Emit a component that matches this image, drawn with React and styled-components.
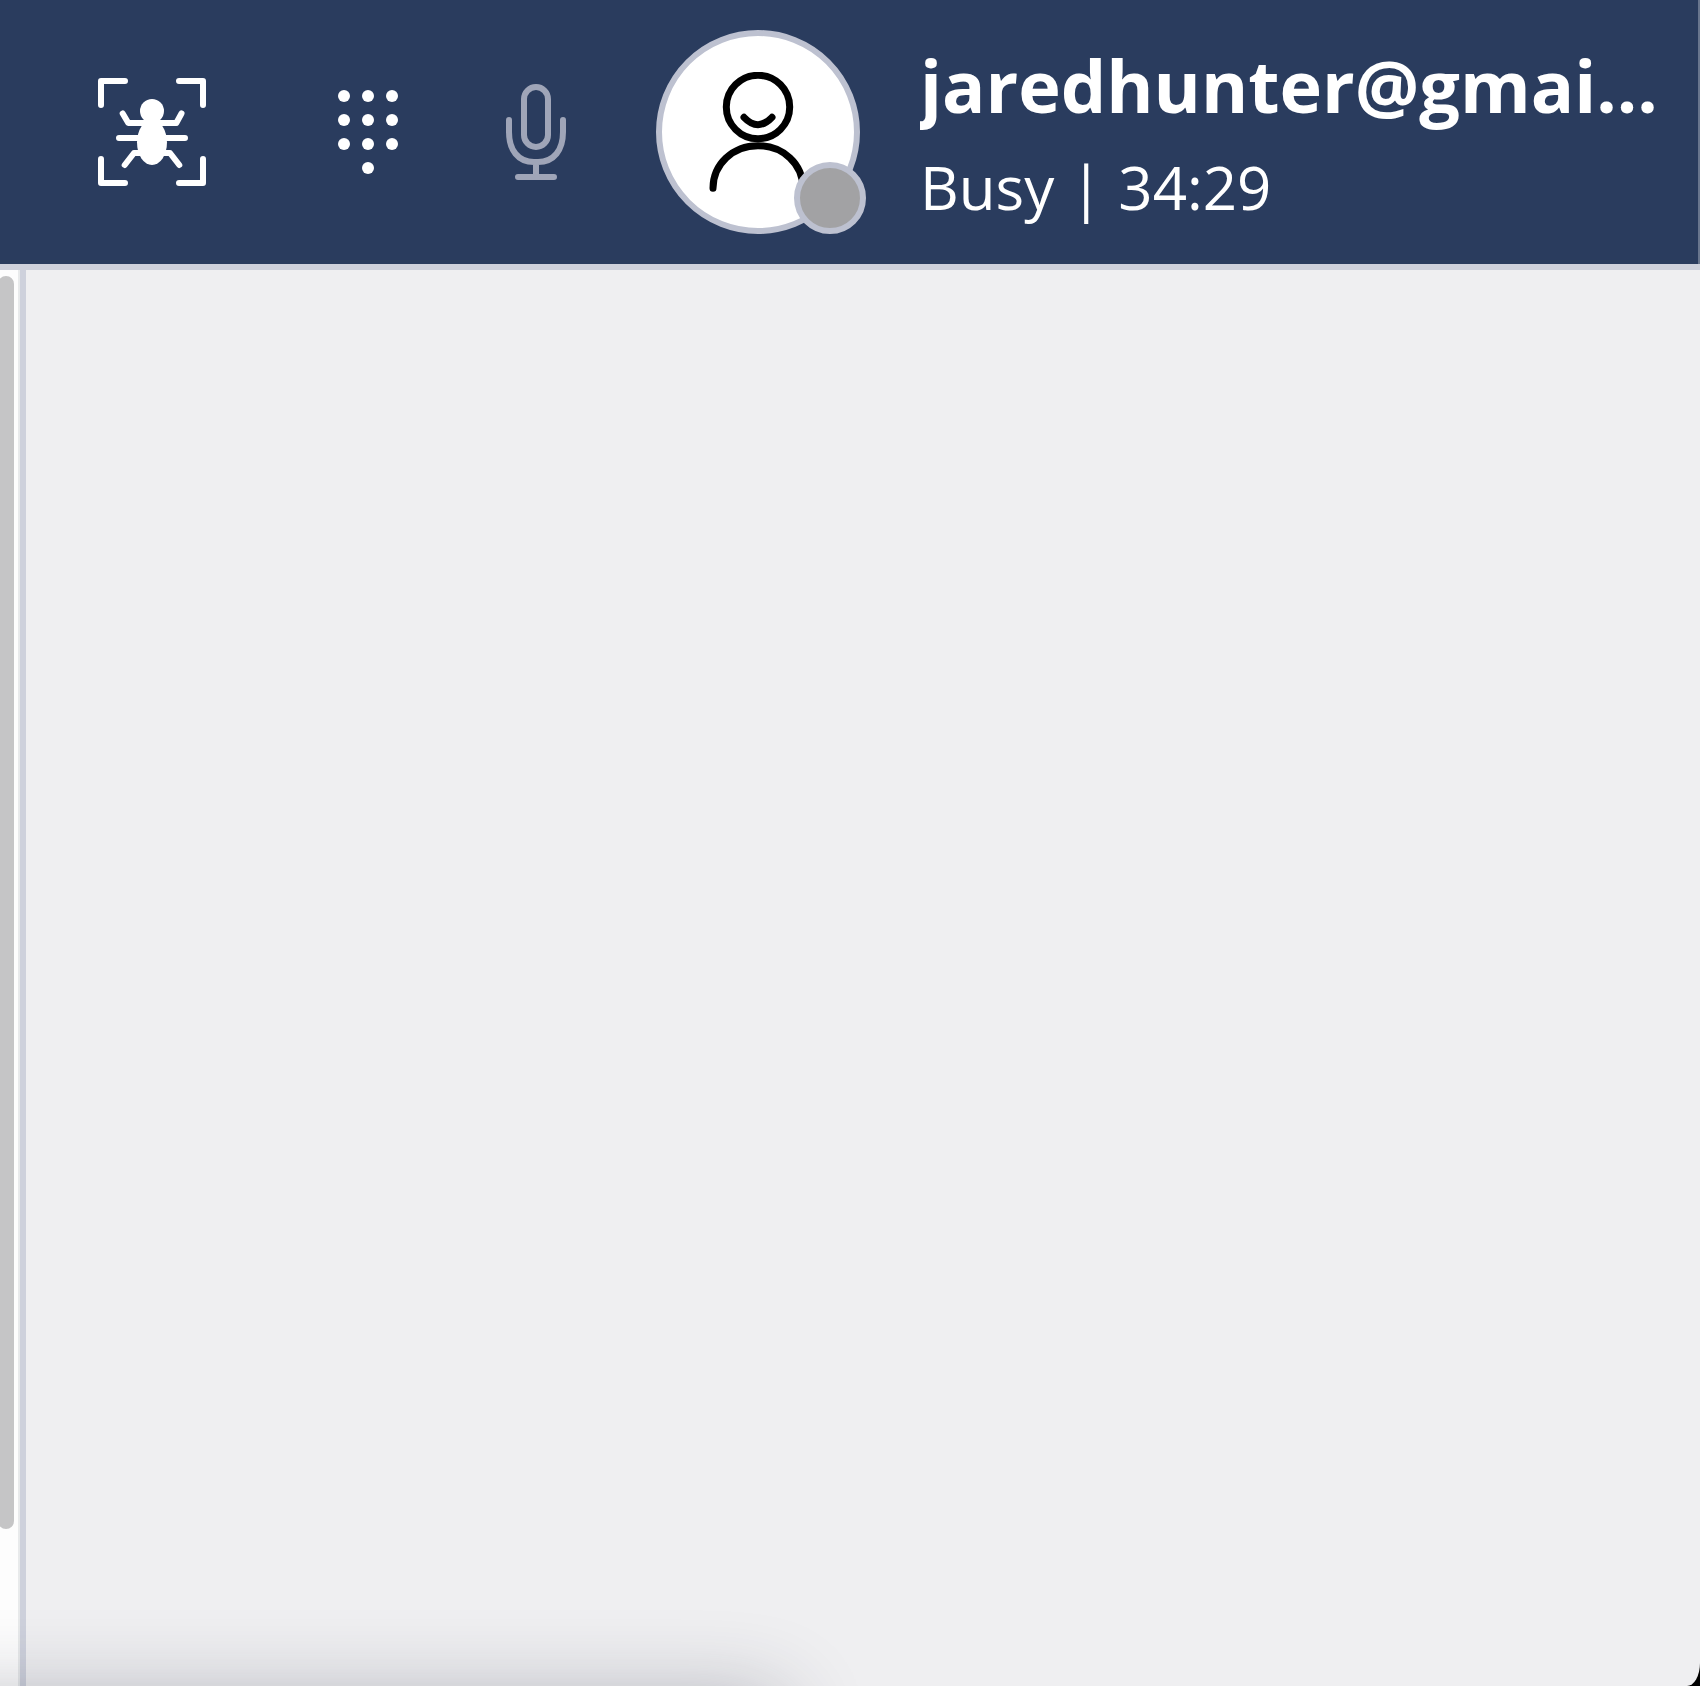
import React from "react";
import styled, { createGlobalStyle } from "styled-components";

const GlobalStyle = createGlobalStyle`
  * { box-sizing: border-box; }
  html { background: #000; }
  body { margin: 0; overflow: hidden; }
`;

const Window = styled.div`
  position: relative;
  display: flex;
  flex-direction: column;
  width: 1700px;
  height: 1686px;
  overflow: hidden;
  background: #efeff1;
  border-bottom-right-radius: 13px 23px;
  font-family: "Open Sans", "Noto Sans", sans-serif;
`;

const Header = styled.header`
  display: flex;
  align-items: center;
  flex: none;
  height: 270px;
  padding-left: 98px;
  background: #2a3c5e;
  border-bottom: 6px solid #ced1dc;
  box-shadow: inset -2px 0 0 #69768e;
`;

const IconButton = styled.button`
  display: flex;
  flex: none;
  margin: 0 ${(p) => p.$gap}px 0 0;
  padding: 0;
  border: 0;
  background: none;
  color: ${(p) => (p.$muted ? "#9fa5b8" : "#fff")};
`;

const Icon = styled.svg`
  display: block;
  fill: none;
  stroke: currentColor;
  stroke-width: ${(p) => p.$stroke || 6};
  stroke-linecap: round;
  stroke-linejoin: round;
`;

const Avatar = styled.div`
  position: relative;
  flex: none;
  display: flex;
  align-items: center;
  justify-content: center;
  width: 204px;
  height: 204px;
  border: 6px solid #bdc1d0;
  border-radius: 50%;
  background: #fff;
  color: #000;
`;

const StatusBadge = styled.span`
  position: absolute;
  right: -12px;
  bottom: -6px;
  width: 72px;
  height: 72px;
  border: 6px solid #bdc1d0;
  border-radius: 50%;
  background: #a2a2a4;
`;

const Identity = styled.div`
  display: flex;
  flex-direction: column;
  width: 740px;
  margin-left: 60px;
  color: #fff;
  white-space: nowrap;
`;

const Email = styled.span`
  overflow: hidden;
  font-size: 72px;
  font-weight: 700;
  line-height: 110px;
`;

const Status = styled.span`
  font-size: 60px;
  line-height: 94px;
`;

const Body = styled.div`
  display: flex;
  flex: 1;
`;

const ScrollGutter = styled.aside`
  width: 26px;
  padding-top: 6px;
  overflow: hidden;
  background: linear-gradient(90deg, #fdfdfd 0 18px, #e8eaeb 18px 20px);
  border-right: 6px solid #ced1dc;
`;

const ScrollThumb = styled.div`
  width: 16px;
  height: 1253px;
  margin-left: -2px;
  border-radius: 8px;
  background: #c5c5c6;
`;

const Workspace = styled.main`
  flex: 1;
`;

const PopupShadow = styled.div`
  position: absolute;
  left: -200px;
  top: 1698px;
  width: 982px;
  height: 200px;
  border-radius: 12px;
  box-shadow: 0 0 84px rgba(40, 45, 65, 0.32);
`;

const BugScanIcon = () => (
  <Icon width="108" height="108" viewBox="98 78 108 108">
    <path d="M125 81H101V105M179 81H203V105M101 159V183H125M203 159V183H179" />
    <path d="M122.7 113.5L128.3 123H176.3L181.5 113.5M119 138H185M124.7 165L134 153H170L179.3 165" />
    <circle cx="152" cy="111" r="12" fill="currentColor" stroke="none" />
    <ellipse cx="152" cy="142.5" rx="15" ry="22.5" fill="currentColor" stroke="none" />
  </Icon>
);

const KEYS = [
  [344, 96], [368, 96], [392, 96],
  [344, 120], [368, 120], [392, 120],
  [344, 144], [368, 144], [392, 144],
  [368, 168],
];

const KeypadIcon = () => (
  <Icon width="60" height="84" viewBox="338 90 60 84">
    {KEYS.map(([x, y]) => (
      <circle key={`${x}-${y}`} cx={x} cy={y} r="6" fill="currentColor" stroke="none" />
    ))}
  </Icon>
);

const MicIcon = () => (
  <Icon width="60" height="96" viewBox="506 84 60 96">
    <rect x="524" y="87" width="24" height="60" rx="12" />
    <path d="M509 120V132C509 150 518 162 534 162H538C554 162 563 150 563 132V120M536 162V177M518 177H554" />
  </Icon>
);

const PersonIcon = () => (
  <Icon width="100" height="120" viewBox="708 72 100 120" $stroke={7}>
    <circle cx="758" cy="107" r="31.7" />
    <path d="M744 117.3Q758 132 772 117.3" />
    <path d="M713 188.3C713 164 733 145.7 758 145.7S803 164 803 188.3" />
  </Icon>
);

export default function App() {
  return (
    <Window>
      <GlobalStyle />
      <Header>
        <IconButton $gap={132} aria-label="Report a bug"><BugScanIcon /></IconButton>
        <IconButton $gap={108} aria-label="Dial pad"><KeypadIcon /></IconButton>
        <IconButton $gap={90} $muted aria-label="Microphone"><MicIcon /></IconButton>
        <Avatar>
          <PersonIcon />
          <StatusBadge />
        </Avatar>
        <Identity>
          <Email>jaredhunter@gmai...</Email>
          <Status>Busy | 34:29</Status>
        </Identity>
      </Header>
      <Body>
        <ScrollGutter><ScrollThumb /></ScrollGutter>
        <Workspace />
      </Body>
      <PopupShadow />
    </Window>
  );
}
